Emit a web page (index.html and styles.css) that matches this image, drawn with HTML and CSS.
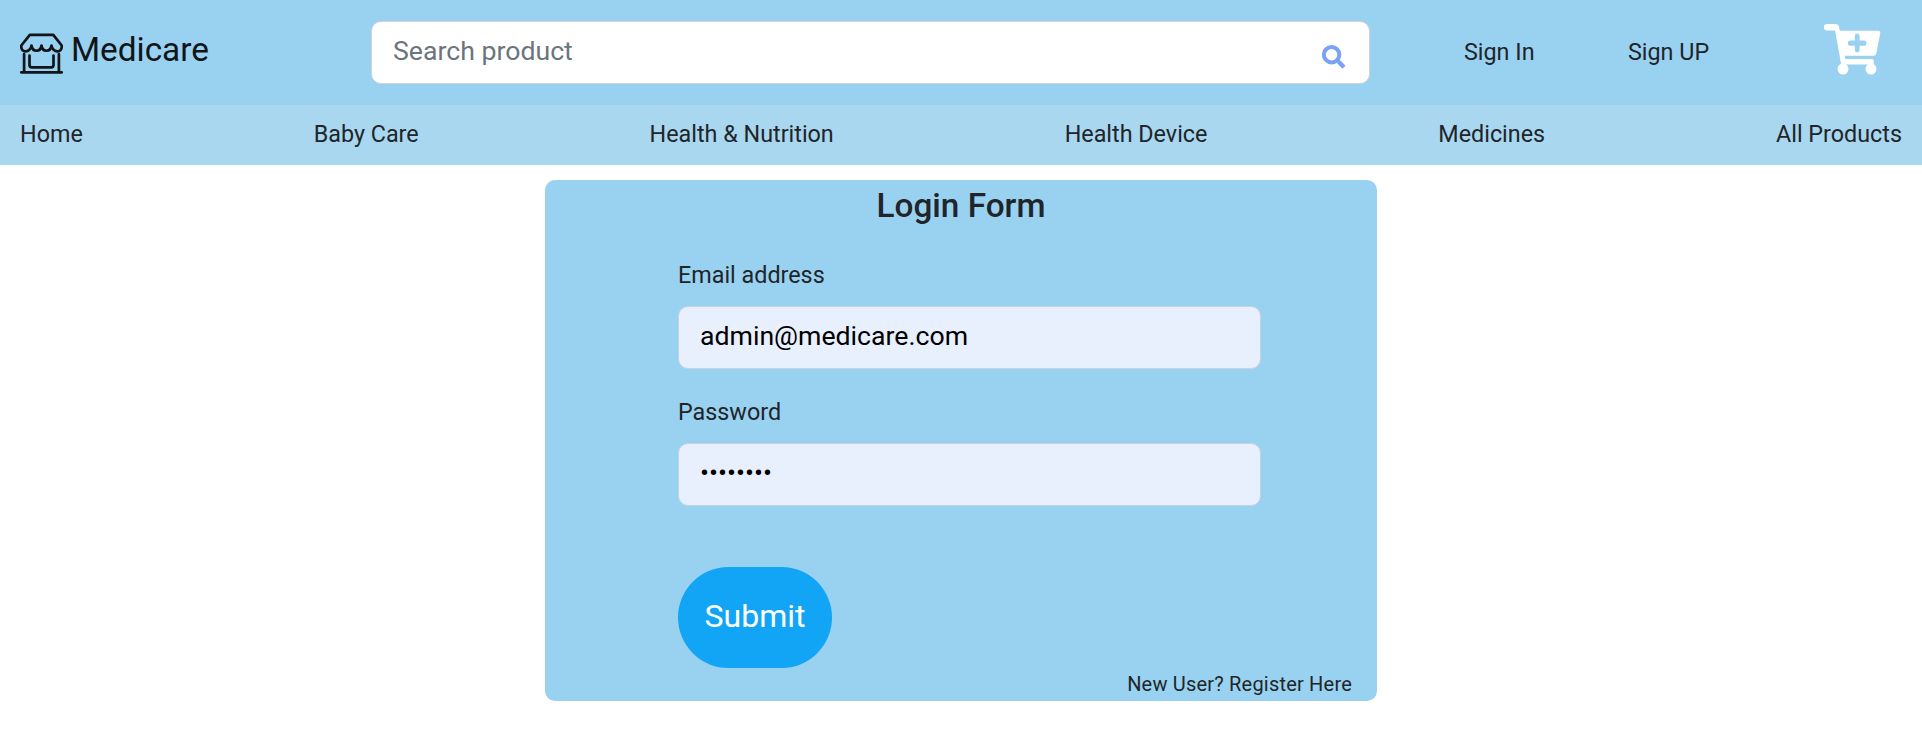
FILE: index.html
```html
<!DOCTYPE html>
<html lang="en">
<head>
<meta charset="utf-8">
<title>Medicare</title>
<link rel="stylesheet" href="styles.css">
</head>
<body>
<header class="header">
  <a class="brand">
    <svg class="brand-icon" viewBox="0 0 43 41" fill="none" stroke="#111518" stroke-width="2.7" stroke-linecap="round" stroke-linejoin="round">
      <path d="M1.300 12.500 9.800 1.800H33.300L41.700 12.500C42.500 21 32.500 19.500 31.500 12.500C30.500 19.500 22.500 19.500 21.500 12.500C20.500 19.500 12.500 19.500 11.500 12.500C10.500 19.500 .5 21 1.300 12.500Z"/>
      <path d="M4.100 21V39M38.900 21V39M1.300 39.300H41.700M9.500 22.500V32Q9.500 34.300 11.800 34.300H31.200Q33.500 34.300 33.500 32V22.500"/>
    </svg>
    <span class="brand-name">Medicare</span>
  </a>
  <form class="search">
    <input class="field search-input" type="text" placeholder="Search product">
    <svg class="search-icon" viewBox="0 0 24 24" fill="none" stroke="#7aa2f7" stroke-width="4">
      <circle cx="9.600" cy="9.700" r="7.700"/><path d="M15.200 15.300 22 22.200" stroke-width="4.400"/>
    </svg>
  </form>
  <a class="sign sign-in">Sign In</a>
  <a class="sign sign-up">Sign UP</a>
  <svg class="cart" viewBox="0 0 57 51" fill="#fff">
    <path fill-rule="evenodd" d="M3 0H12Q14.500 0 15 2.500L15.800 6.700H54.500Q56.700 6.700 56.300 9L52.300 29.500Q51.900 31.700 49.500 31.700H20.700L21.300 35H47.500Q49.800 35 49.800 37V40.500H17.200L11 6.500H3A3.250 3.250 0 0 1 3 0ZM30.800 12V16.600H26.500A2.600 2.600 0 0 0 26.500 21.800H30.800V26A2.400 2.400 0 0 0 35.600 26V21.800H39.800A2.600 2.600 0 0 0 39.800 16.600H35.600V12A2.400 2.400 0 0 0 30.800 12Z"/>
    <circle cx="19" cy="45" r="5.500"/><circle cx="47" cy="45" r="5.500"/>
  </svg>
</header>
<nav class="nav">
  <a>Home</a><a>Baby Care</a><a>Health &amp; Nutrition</a><a>Health Device</a><a>Medicines</a><a>All Products</a>
</nav>
<main class="card">
  <h1 class="title">Login Form</h1>
  <form class="login">
    <label class="label" for="email">Email address</label>
    <input class="field filled" id="email" type="text" value="admin@medicare.com">
    <label class="label" for="password">Password</label>
    <input class="field filled" id="password" type="password" value="medicare">
    <button class="submit" type="button">Submit</button>
  </form>
  <a class="register">New User? Register Here</a>
</main>
</body>
</html>
```
FILE: styles.css
```css
* { box-sizing: border-box; }
body { margin: 0; background: #fff; color: #212529; font-family: Roboto, sans-serif; overflow: hidden; }
.header { display: flex; align-items: flex-start; height: 105px; background: #99d1f0; }
.brand { display: flex; width: 371px; padding-left: 20px; color: #111518; }
.brand-icon { width: 43px; height: 41px; margin-top: 33px; }
.brand-name { margin: 30px 0 0 8px; font-size: 33.330px; line-height: 39px; }
.search { position: relative; width: 999px; margin-top: 21px; }
.search-icon { position: absolute; left: 951px; top: 24px; width: 24px; height: 24px; }
.field { display: block; width: 100%; height: 63px; padding: 0 20px 3px; border: 1.500px solid #ced4da; border-radius: 10px; background: #fff; color: #000; font-family: inherit; font-size: 26.670px; outline: none; }
.search-input { padding-left: 21px; }
.field::placeholder { color: #6c757d; opacity: 1; }
.sign { margin-top: 38px; font-size: 23.330px; line-height: 28px; white-space: nowrap; }
.sign-in { width: 164px; margin-left: 94px; }
.sign-up { width: 196px; }
.cart { width: 57px; height: 51px; margin-top: 24px; }
.nav { display: flex; justify-content: space-between; height: 60px; padding: 15px 20px 0; background: #a8d7ef; font-size: 23.330px; line-height: 28px; }
.card { display: flex; flex-direction: column; width: 832px; height: 521px; margin: 15px 0 0 545px; border-radius: 10px; background: #99d1f0; }
.title { margin: 6px 0 0; font-size: 33.330px; font-weight: 500; line-height: 39px; text-align: center; }
.login { width: 583px; margin-left: 133px; padding-top: 36px; }
.label { display: block; margin-bottom: 16px; font-size: 23.330px; line-height: 29px; }
.filled { padding-left: 21px; margin-bottom: 29px; border-color: #c5d3e0; background: #e8f0fe; }
.submit { display: block; width: 154px; height: 101px; margin-top: 61px; padding: 0 0 3px; border: 0; border-radius: 51px; background: #12a5f6; color: #fff; font-family: inherit; font-size: 32px; }
.register { align-self: flex-end; margin: 4px 25px 0 0; font-size: 20px; line-height: 24px; letter-spacing: .2px; }
```
